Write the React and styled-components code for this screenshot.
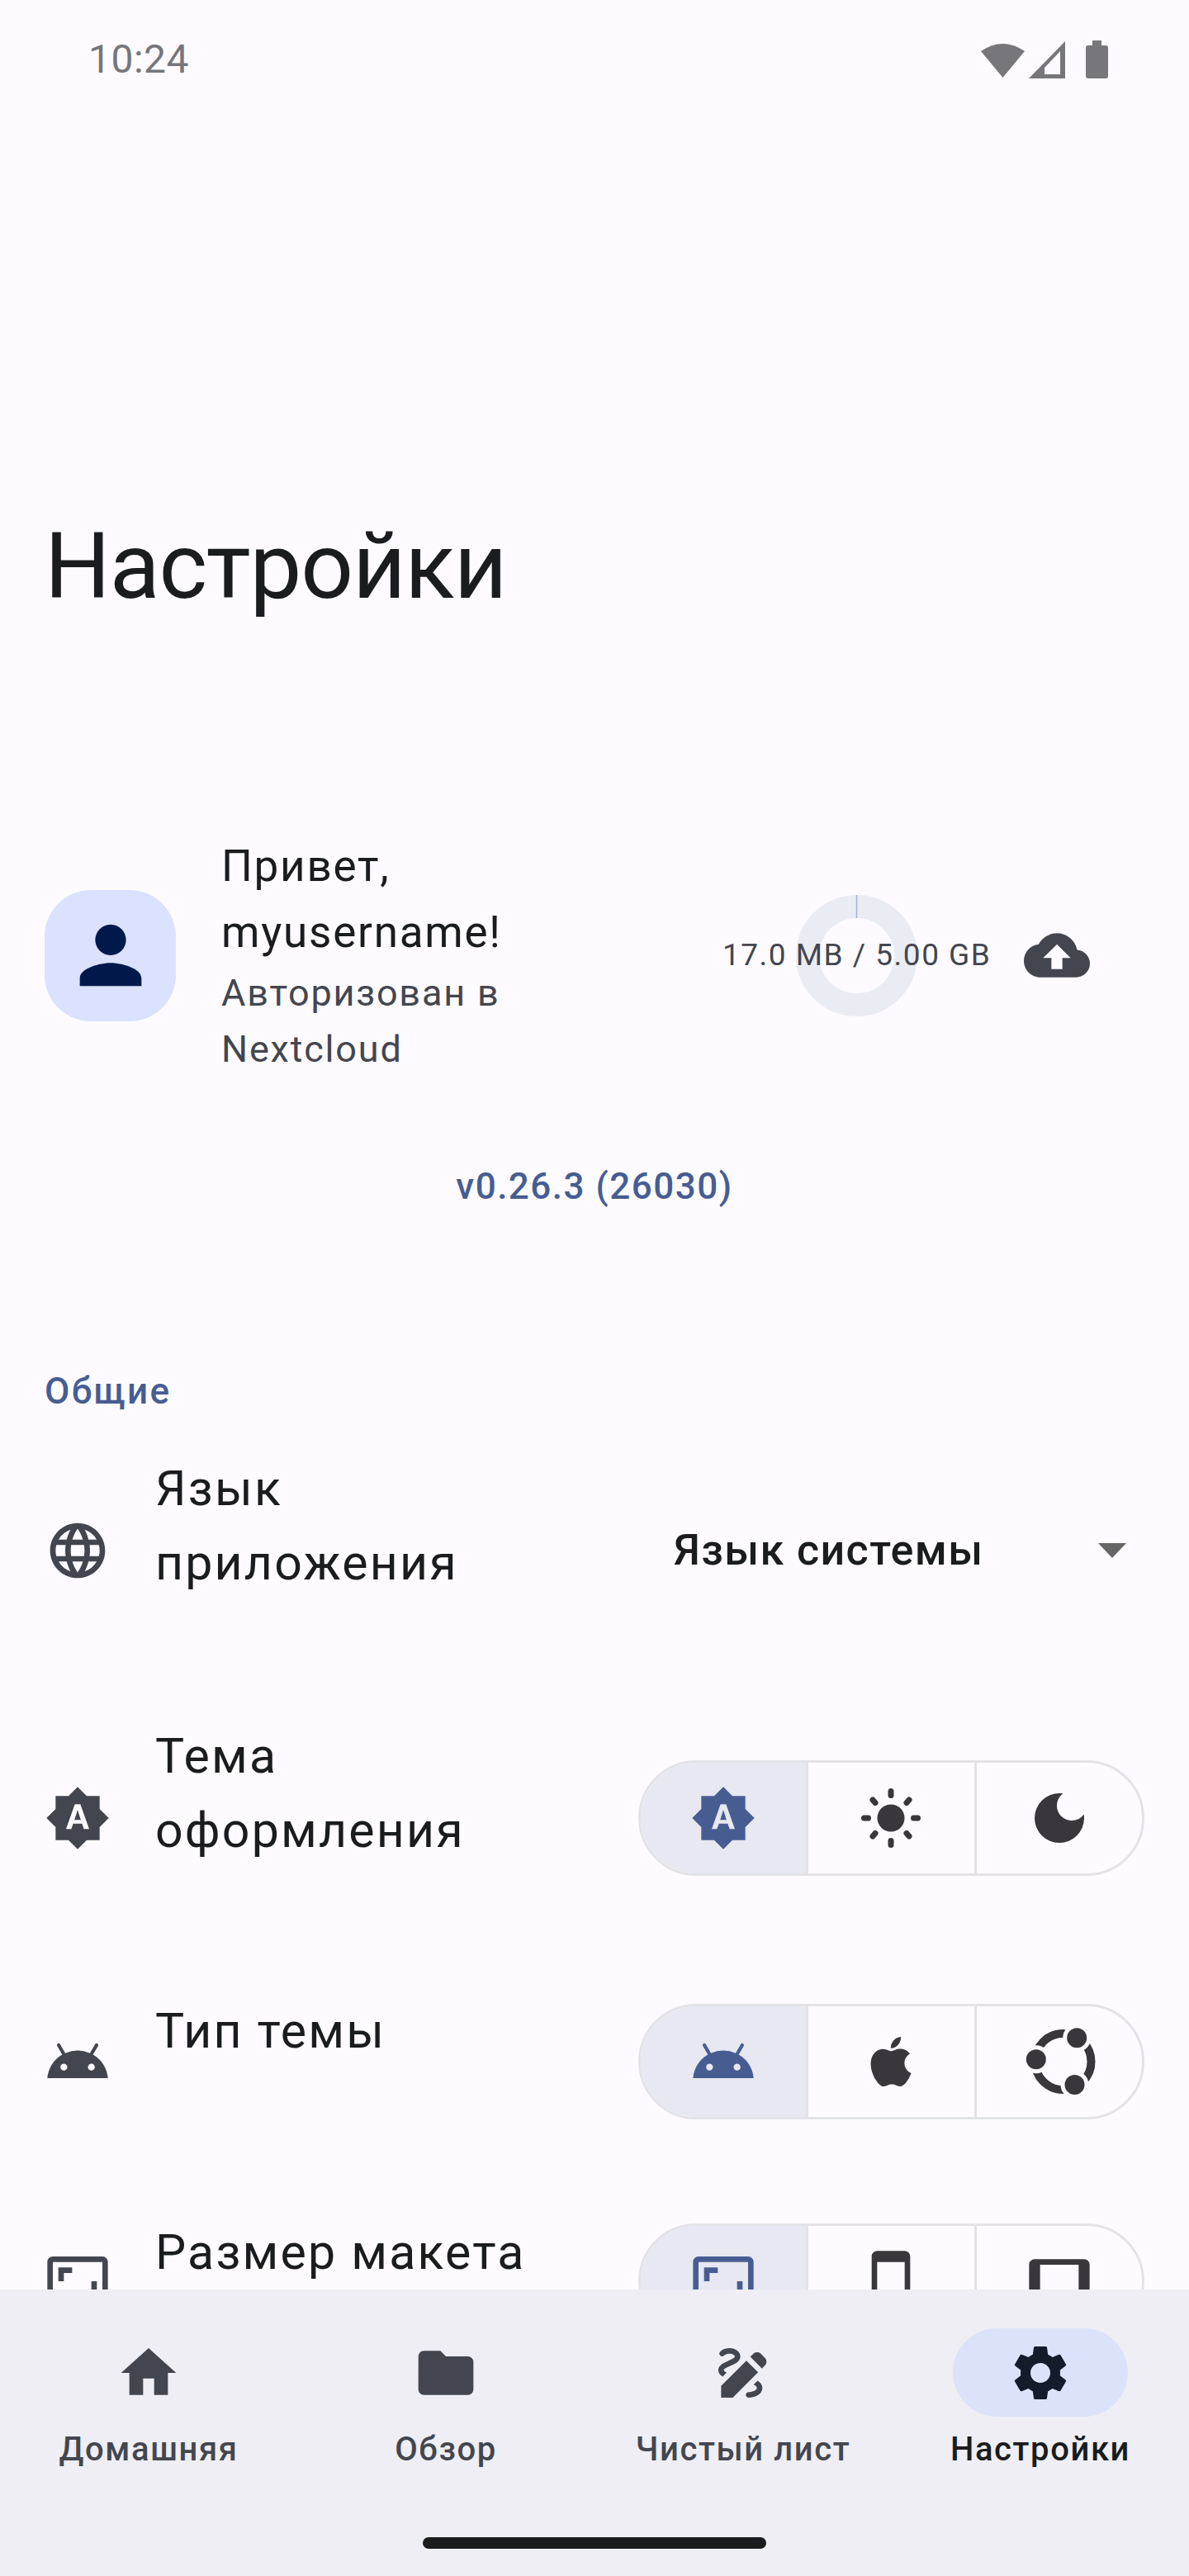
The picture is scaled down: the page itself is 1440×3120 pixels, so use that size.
import React from "react";
import styled, { createGlobalStyle } from "styled-components";
import { SiApple } from "react-icons/si";
import {
  MdAndroid,
  MdAspectRatio,
  MdBrightnessAuto,
  MdCloudUpload,
  MdDarkMode,
  MdDraw,
  MdFolder,
  MdHome,
  MdLanguage,
  MdPerson,
  MdSettings,
  MdSmartphone,
  MdTablet,
} from "react-icons/md";

const GlobalStyle = createGlobalStyle`
  html, body {
    margin: 0;
    padding: 0;
    background: #fdfbff;
  }
  * {
    box-sizing: border-box;
  }
`;

const SunIcon = () => (
  <svg width="84" height="84" viewBox="0 0 84 84" fill="currentColor">
    <circle cx="42" cy="42" r="16.5" />
    <g stroke="currentColor" strokeWidth="7" strokeLinecap="round">
      <line x1="42" y1="9.5" x2="42" y2="14.5" />
      <line x1="42" y1="69.5" x2="42" y2="74.5" />
      <line x1="9.5" y1="42" x2="14.5" y2="42" />
      <line x1="69.5" y1="42" x2="74.5" y2="42" />
      <line x1="20" y1="20" x2="23" y2="23.5" />
      <line x1="64" y1="20" x2="61" y2="23.5" />
      <line x1="20" y1="64" x2="23" y2="60.5" />
      <line x1="64" y1="64" x2="61" y2="60.5" />
    </g>
  </svg>
);

const UbuntuIcon = () => (
  <svg width="90" height="90" viewBox="-4.5 0 90 90" fill="currentColor">
    <circle cx="45" cy="45" r="34" fill="none" stroke="currentColor" strokeWidth="10" />
    <g stroke="#fdfbff" strokeWidth="5">
      <circle cx="61.7" cy="16.3" r="14.5" />
      <circle cx="12.3" cy="42.3" r="14.5" />
      <circle cx="59" cy="73" r="14.5" />
    </g>
  </svg>
);

const StatusGlyphs = () => (
  <svg width="154" height="46" viewBox="0 0 154 46" fill="#77767b">
    <path d="M0 13Q26.5-5 53 13L26.5 45Z" />
    <path
      fillRule="evenodd"
      d="M58 46L102 1V46ZM77 41H96V13L77 33Z"
    />
    <path d="M135 0H146V6H151Q154 6 154 9V43Q154 46 151 46H130Q127 46 127 43V9Q127 6 130 6H135Z" />
  </svg>
);

const Page = styled.div`
  display: flex;
  flex-direction: column;
  width: 1440px;
  height: 3120px;
  overflow: hidden;
  background: #fdfbff;
  font-family: Roboto, "Liberation Sans", sans-serif;
  color: #1a1c1e;
`;

const Content = styled.main`
  flex: 1;
  min-height: 0;
  overflow: hidden;
`;

const StatusBar = styled.div`
  display: flex;
  justify-content: space-between;
  height: 144px;
  padding: 49px 98px 0 107px;
`;

const Clock = styled.span`
  font-size: 48px;
  line-height: 46px;
  letter-spacing: 0.5px;
  color: #77767b;
`;

const Title = styled.h1`
  margin: 472px 0 0;
  padding-left: 54px;
  font-size: 112px;
  font-weight: 400;
  line-height: 140px;
  letter-spacing: -1.2px;
`;

const Account = styled.section`
  display: flex;
  align-items: center;
  margin-top: 253px;
  padding: 0 120px 0 54px;
`;

const Avatar = styled.div`
  display: flex;
  flex: none;
  align-items: center;
  justify-content: center;
  width: 159px;
  height: 159px;
  border-radius: 56px;
  background: #dae2ff;
  color: #00194b;
`;

const AccountText = styled.div`
  flex: 1;
  min-width: 0;
  margin-left: 55px;
`;

const Greeting = styled.div`
  font-size: 53px;
  line-height: 80px;
  letter-spacing: 1.75px;
`;

const AccountNote = styled.div`
  font-size: 45px;
  line-height: 68px;
  letter-spacing: 1.8px;
  color: #44464f;
`;

const Usage = styled.div`
  display: grid;
  flex: none;
  place-items: center;
  width: 322px;
  margin-right: 43px;

  & > * {
    grid-area: 1 / 1;
  }
`;

const UsageText = styled.span`
  font-size: 37px;
  line-height: 48px;
  letter-spacing: 1.5px;
  white-space: nowrap;
  color: #44464f;
`;

const CloudSlot = styled.div`
  display: flex;
  flex: none;
  color: #44464f;
`;

const Version = styled.div`
  margin-top: 102px;
  font-size: 44px;
  font-weight: 500;
  line-height: 60px;
  letter-spacing: 1.5px;
  text-align: center;
  color: #475d92;
`;

const SectionTitle = styled.h2`
  margin: 188px 0 0;
  padding-left: 54px;
  font-size: 44px;
  font-weight: 500;
  line-height: 60px;
  letter-spacing: 2.4px;
  color: #475d92;
`;

const Row = styled.div`
  display: flex;
  align-items: center;
  margin-top: ${(props) => props.$top}px;
  padding: 0 54px;
`;

const RowIcon = styled.div`
  display: flex;
  flex: none;
  width: 80px;
  color: #44464f;
`;

const RowText = styled.div`
  flex: 1;
  min-width: 0;
  margin-left: 54px;
  padding-bottom: ${(props) => props.$tail}px;
  font-size: 59px;
  line-height: 90px;
  letter-spacing: 2.2px;
`;

const Select = styled.div`
  display: flex;
  flex: none;
  align-items: center;
  justify-content: space-between;
  width: 570px;
  padding-right: 22px;
  font-size: 52px;
  font-weight: 500;
  letter-spacing: 1.4px;
`;

const Caret = styled.span`
  width: 0;
  height: 0;
  border-top: 18px solid #666666;
  border-right: 17px solid transparent;
  border-left: 17px solid transparent;
`;

const Toggle = styled.div`
  display: flex;
  flex: none;
  width: 613px;
  height: 140px;
  overflow: hidden;
  border: 3px solid #e3e3e7;
  border-radius: 70px;
`;

const Segment = styled.div`
  display: flex;
  flex: 1;
  align-items: center;
  justify-content: center;
  background: ${(props) => (props.$active ? "#e7e8f1" : "transparent")};
  color: ${(props) => (props.$active ? "#475d92" : "#39373c")};

  & + & {
    border-left: 3px solid #e3e3e7;
  }
`;

const BottomNav = styled.nav`
  flex: none;
  height: 347px;
  padding-top: 47px;
  background: #eeeef4;
`;

const NavItems = styled.div`
  display: grid;
  grid-template-columns: repeat(4, 1fr);
`;

const NavItem = styled.div`
  display: flex;
  flex-direction: column;
  align-items: center;
`;

const NavPill = styled.div`
  display: flex;
  align-items: center;
  justify-content: center;
  width: 212px;
  height: 107px;
  border-radius: 54px;
  background: ${(props) => (props.$active ? "#dce2f9" : "transparent")};
  color: ${(props) => (props.$active ? "#141b2c" : "#44464f")};
`;

const NavLabel = styled.span`
  margin-top: 12px;
  font-size: 40px;
  font-weight: 500;
  line-height: 56px;
  letter-spacing: 1.6px;
  color: ${(props) => (props.$active ? "#1a1c1e" : "#44464f")};
`;

const HomeIndicator = styled.div`
  width: 416px;
  height: 14px;
  margin: 78px auto 0;
  border-radius: 7px;
  background: #1a1c1e;
`;

const toggles = {
  theme: [<MdBrightnessAuto size={80} />, <SunIcon />, <MdDarkMode size={80} />],
  style: [<MdAndroid size={80} />, <SiApple size={60} />, <UbuntuIcon />],
  layout: [<MdAspectRatio size={80} />, <MdSmartphone size={80} />, <MdTablet size={80} />],
};

const navItems = [
  { label: "Домашняя", icon: <MdHome size={80} /> },
  { label: "Обзор", icon: <MdFolder size={80} /> },
  { label: "Чистый лист", icon: <MdDraw size={80} /> },
  { label: "Настройки", icon: <MdSettings size={80} />, active: true },
];

const ToggleGroup = ({ icons }) => (
  <Toggle>
    {icons.map((icon, index) => (
      <Segment $active={index === 0} key={index}>
        {icon}
      </Segment>
    ))}
  </Toggle>
);

const Ring = () => (
  <svg width="147" height="147" viewBox="0 0 147 147">
    <circle cx="73.5" cy="73.5" r="59.5" fill="none" stroke="#eaecf4" strokeWidth="28" />
    <line x1="73.5" y1="0" x2="73.5" y2="28" stroke="#a3b2d2" strokeWidth="1.5" />
  </svg>
);

export default function App() {
  return (
    <Page>
      <GlobalStyle />
      <Content>
        <StatusBar>
          <Clock>10:24</Clock>
          <StatusGlyphs />
        </StatusBar>
        <Title>Настройки</Title>
        <Account>
          <Avatar>
            <MdPerson size={112} />
          </Avatar>
          <AccountText>
            <Greeting>
              Привет,
              <br />
              myusername!
            </Greeting>
            <AccountNote>
              Авторизован в
              <br />
              Nextcloud
            </AccountNote>
          </AccountText>
          <Usage>
            <Ring />
            <UsageText>17.0 MB / 5.00 GB</UsageText>
          </Usage>
          <CloudSlot>
            <MdCloudUpload size={80} />
          </CloudSlot>
        </Account>
        <Version>v0.26.3 (26030)</Version>
        <SectionTitle>Общие</SectionTitle>
        <Row $top={43}>
          <RowIcon>
            <MdLanguage size={80} />
          </RowIcon>
          <RowText $tail={59}>
            Язык
            <br />
            приложения
          </RowText>
          <Select>
            Язык системы
            <Caret />
          </Select>
        </Row>
        <Row $top={85}>
          <RowIcon>
            <MdBrightnessAuto size={80} />
          </RowIcon>
          <RowText $tail={59}>
            Тема
            <br />
            оформления
          </RowText>
          <ToggleGroup icons={toggles.theme} />
        </Row>
        <Row $top={94}>
          <RowIcon>
            <MdAndroid size={80} />
          </RowIcon>
          <RowText $tail={73}>Тип темы</RowText>
          <ToggleGroup icons={toggles.style} />
        </Row>
        <Row $top={105}>
          <RowIcon>
            <MdAspectRatio size={80} />
          </RowIcon>
          <RowText $tail={69}>Размер макета</RowText>
          <ToggleGroup icons={toggles.layout} />
        </Row>
      </Content>
      <BottomNav>
        <NavItems>
          {navItems.map((item) => (
            <NavItem key={item.label}>
              <NavPill $active={item.active}>{item.icon}</NavPill>
              <NavLabel $active={item.active}>{item.label}</NavLabel>
            </NavItem>
          ))}
        </NavItems>
        <HomeIndicator />
      </BottomNav>
    </Page>
  );
}
